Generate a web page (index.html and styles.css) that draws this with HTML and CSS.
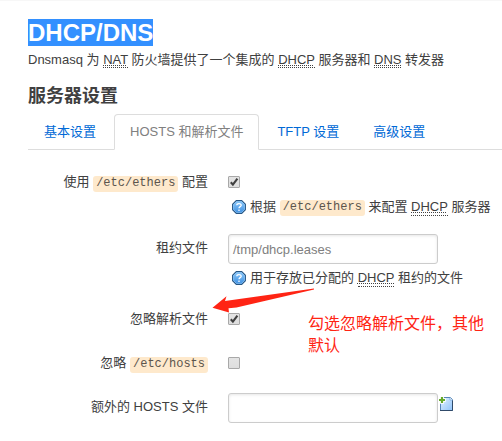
FILE: index.html
```html
<!DOCTYPE html>
<html lang="zh-CN">
<head>
<meta charset="utf-8">
<title>DHCP/DNS</title>
<link rel="stylesheet" href="styles.css">
</head>
<body>
<svg class="symbols" aria-hidden="true">
  <defs>
    <linearGradient id="blue" x1="0" y1="0" x2="0" y2="1"><stop offset="0" stop-color="#8cc9fb"/><stop offset="1" stop-color="#3d8ee0"/></linearGradient>
    <linearGradient id="page" x1="0" y1="0" x2="1" y2="1"><stop offset="0" stop-color="#e3f2ff"/><stop offset="1" stop-color="#8fc3fa"/></linearGradient>
    <symbol id="help" viewBox="0 0 14 14">
      <path d="M4.3.6h5.4l3.7 3.7v5.4l-3.7 3.7H4.3L.6 9.7V4.3z" fill="url(#blue)" stroke="#285785" stroke-width="1.1"/>
      <path d="M4.4 1.6h5.2l2.8 2.8v5.2l-2.8 2.8H4.4L1.6 9.6V4.4z" fill="none" stroke="#9bd0fc" stroke-width=".6"/>
      <path d="M4.8 5.3C4.8 3 9.2 3 9.2 5.2 9.2 6.7 7 6.6 7 8.3M7 9.6v1.5" fill="none" stroke="#fff" stroke-width="1.3"/>
    </symbol>
  </defs>
</svg>
<main class="page">
  <h2><span class="selected">DHCP/DNS</span></h2>
  <p class="intro">Dnsmasq 为 <abbr>NAT</abbr> 防火墙提供了一个集成的 <abbr>DHCP</abbr> 服务器和 <abbr>DNS</abbr> 转发器</p>
  <h3>服务器设置</h3>
  <nav class="tabs">
    <a class="tab">基本设置</a>
    <a class="tab active">HOSTS 和解析文件</a>
    <a class="tab">TFTP 设置</a>
    <a class="tab">高级设置</a>
  </nav>
  <form class="form">
    <div class="row row-ethers">
      <label>使用 <code>/etc/ethers</code> 配置</label>
      <div class="field">
        <span class="check"><svg viewBox="0 0 12 12"><path d="M2.8 6.2l2.1 2.4 4.5-6" /></svg></span>
        <p class="hint"><svg class="help"><use href="#help"/></svg>根据 <code>/etc/ethers</code> 来配置 <abbr>DHCP</abbr> 服务器</p>
      </div>
    </div>
    <div class="row row-lease">
      <label>租约文件</label>
      <div class="field">
        <div class="input">/tmp/dhcp.leases</div>
        <p class="hint"><svg class="help"><use href="#help"/></svg>用于存放已分配的 <abbr>DHCP</abbr> 租约的文件</p>
      </div>
    </div>
    <div class="row row-resolv">
      <label>忽略解析文件</label>
      <div class="field"><span class="check"><svg viewBox="0 0 12 12"><path d="M2.8 6.2l2.1 2.4 4.5-6" /></svg></span></div>
    </div>
    <div class="row row-hosts">
      <label>忽略 <code>/etc/hosts</code></label>
      <div class="field"><span class="check"></span></div>
    </div>
    <div class="row row-extra">
      <label>额外的 HOSTS 文件</label>
      <div class="field inline">
        <div class="input"></div>
        <svg class="add" viewBox="0 0 15 15">
          <path d="M1.5 .5h10l2 2v11h-12z" fill="url(#page)" stroke="#5584b5"/>
          <path d="M1 13.5h12.5V3.5" fill="none" stroke="#304a69"/>
          <path d="M11 .5v2.5h2.5" fill="#fff" stroke="#76a5d4" stroke-width=".7"/>
          <path d="M0 0h5v1.2h1.8v3.8H5v1.8H0z" fill="#fff"/>
          <path d="M3 0v6M0 3h6" stroke="#66a92b" stroke-width="2.2"/>
        </svg>
      </div>
    </div>
  </form>
</main>
<svg class="arrow" viewBox="0 0 110 30"><path d="M.5 20.8L14.5 9.3 13 14 102 1.6 102 2.4 24.5 20.4 16.5 21.2 17 25.5z" fill="#ff2414"/></svg>
<div class="note">勾选忽略解析文件，其他<br>默认</div>
</body>
</html>
```
FILE: styles.css
```css
* { box-sizing: border-box; }
body {
  margin: 0;
  height: 441px;
  overflow: hidden;
  position: relative;
  background: #fff;
  border-top: 1px solid #f7f7f7;
  color: #404040;
  font: 13px/18px "Liberation Sans", "Noto Sans CJK SC", sans-serif;
}
.symbols { position: absolute; width: 0; height: 0; }
.page { padding: 18px 0 0 28px; }
h2, h3, p { margin: 0; }
h2 { font-size: 24px; line-height: 27px; height: 32px; }
.selected { display: inline-block; height: 27px; background: #3390ff; color: #fff; }
.intro { height: 18px; white-space: nowrap; }
abbr {
  border-bottom: 1px dotted #404040;
  text-decoration: underline dotted 1px;
  text-underline-offset: 1px;
}
.hint abbr { height: 17px; line-height: 16px; }
h3 { margin-top: 9px; font-size: 18px; line-height: 36px; height: 36px; }
.tabs { display: flex; height: 36px; border-bottom: 1px solid #ddd; }
.tab {
  height: 36px;
  padding: 0 15px;
  margin-right: 2px;
  border: 1px solid transparent;
  border-radius: 4px 4px 0 0;
  line-height: 34px;
  color: #0069d6;
  white-space: nowrap;
}
.tab.active { color: #808080; background: #fff; border-color: #ddd #ddd #fff; }
.form { padding-top: 22px; }
.row { display: grid; grid-template-columns: 180px 1fr; column-gap: 20px; }
.row-ethers { height: 62px; }
.row-lease { height: 75px; }
.row-resolv { height: 44px; }
.row-hosts { height: 40px; }
.row label { text-align: right; line-height: 20px; white-space: nowrap; }
.row-lease label, .row-extra label { padding-top: 4px; }
code {
  display: inline-block;
  height: 16px;
  padding: 0 3px;
  border-radius: 3px;
  background: #fee9cc;
  color: #5c554d;
  font: 12px/15px "Liberation Mono", monospace;
}
.row-ethers .hint code { margin-top: 2px; }
.check {
  display: block;
  width: 12px;
  height: 12px;
  margin-top: 4px;
  border: 1px solid #a8a8a8;
  border-radius: 1px;
  background: linear-gradient(#e4e4e4, #dedede);
}
.check svg { display: block; width: 12px; height: 12px; margin: -1px; }
.check path { fill: none; stroke: #404040; stroke-width: 2.1; }
.hint { display: flex; align-items: center; height: 18px; white-space: pre; padding-left: 4px; }
.row-ethers .hint { margin-top: 10px; }
.row-lease .hint { margin-top: 5px; }
.help { width: 14px; height: 14px; margin: 0 4px 0 0; }
.input {
  width: 210px;
  height: 30px;
  padding: 0 4px;
  border: 1px solid #ccc;
  border-radius: 3px;
  box-shadow: inset 0 1px 3px rgba(0, 0, 0, .1);
  line-height: 29px;
  color: #808080;
}
.inline { display: flex; }
.add { width: 15px; height: 15px; margin: 4px 0 0 1px; }
.arrow { position: absolute; left: 212px; top: 286px; width: 110px; height: 30px; }
.note { position: absolute; left: 308px; top: 312px; font-size: 16px; line-height: 22px; color: #ff2414; white-space: nowrap; }
```
